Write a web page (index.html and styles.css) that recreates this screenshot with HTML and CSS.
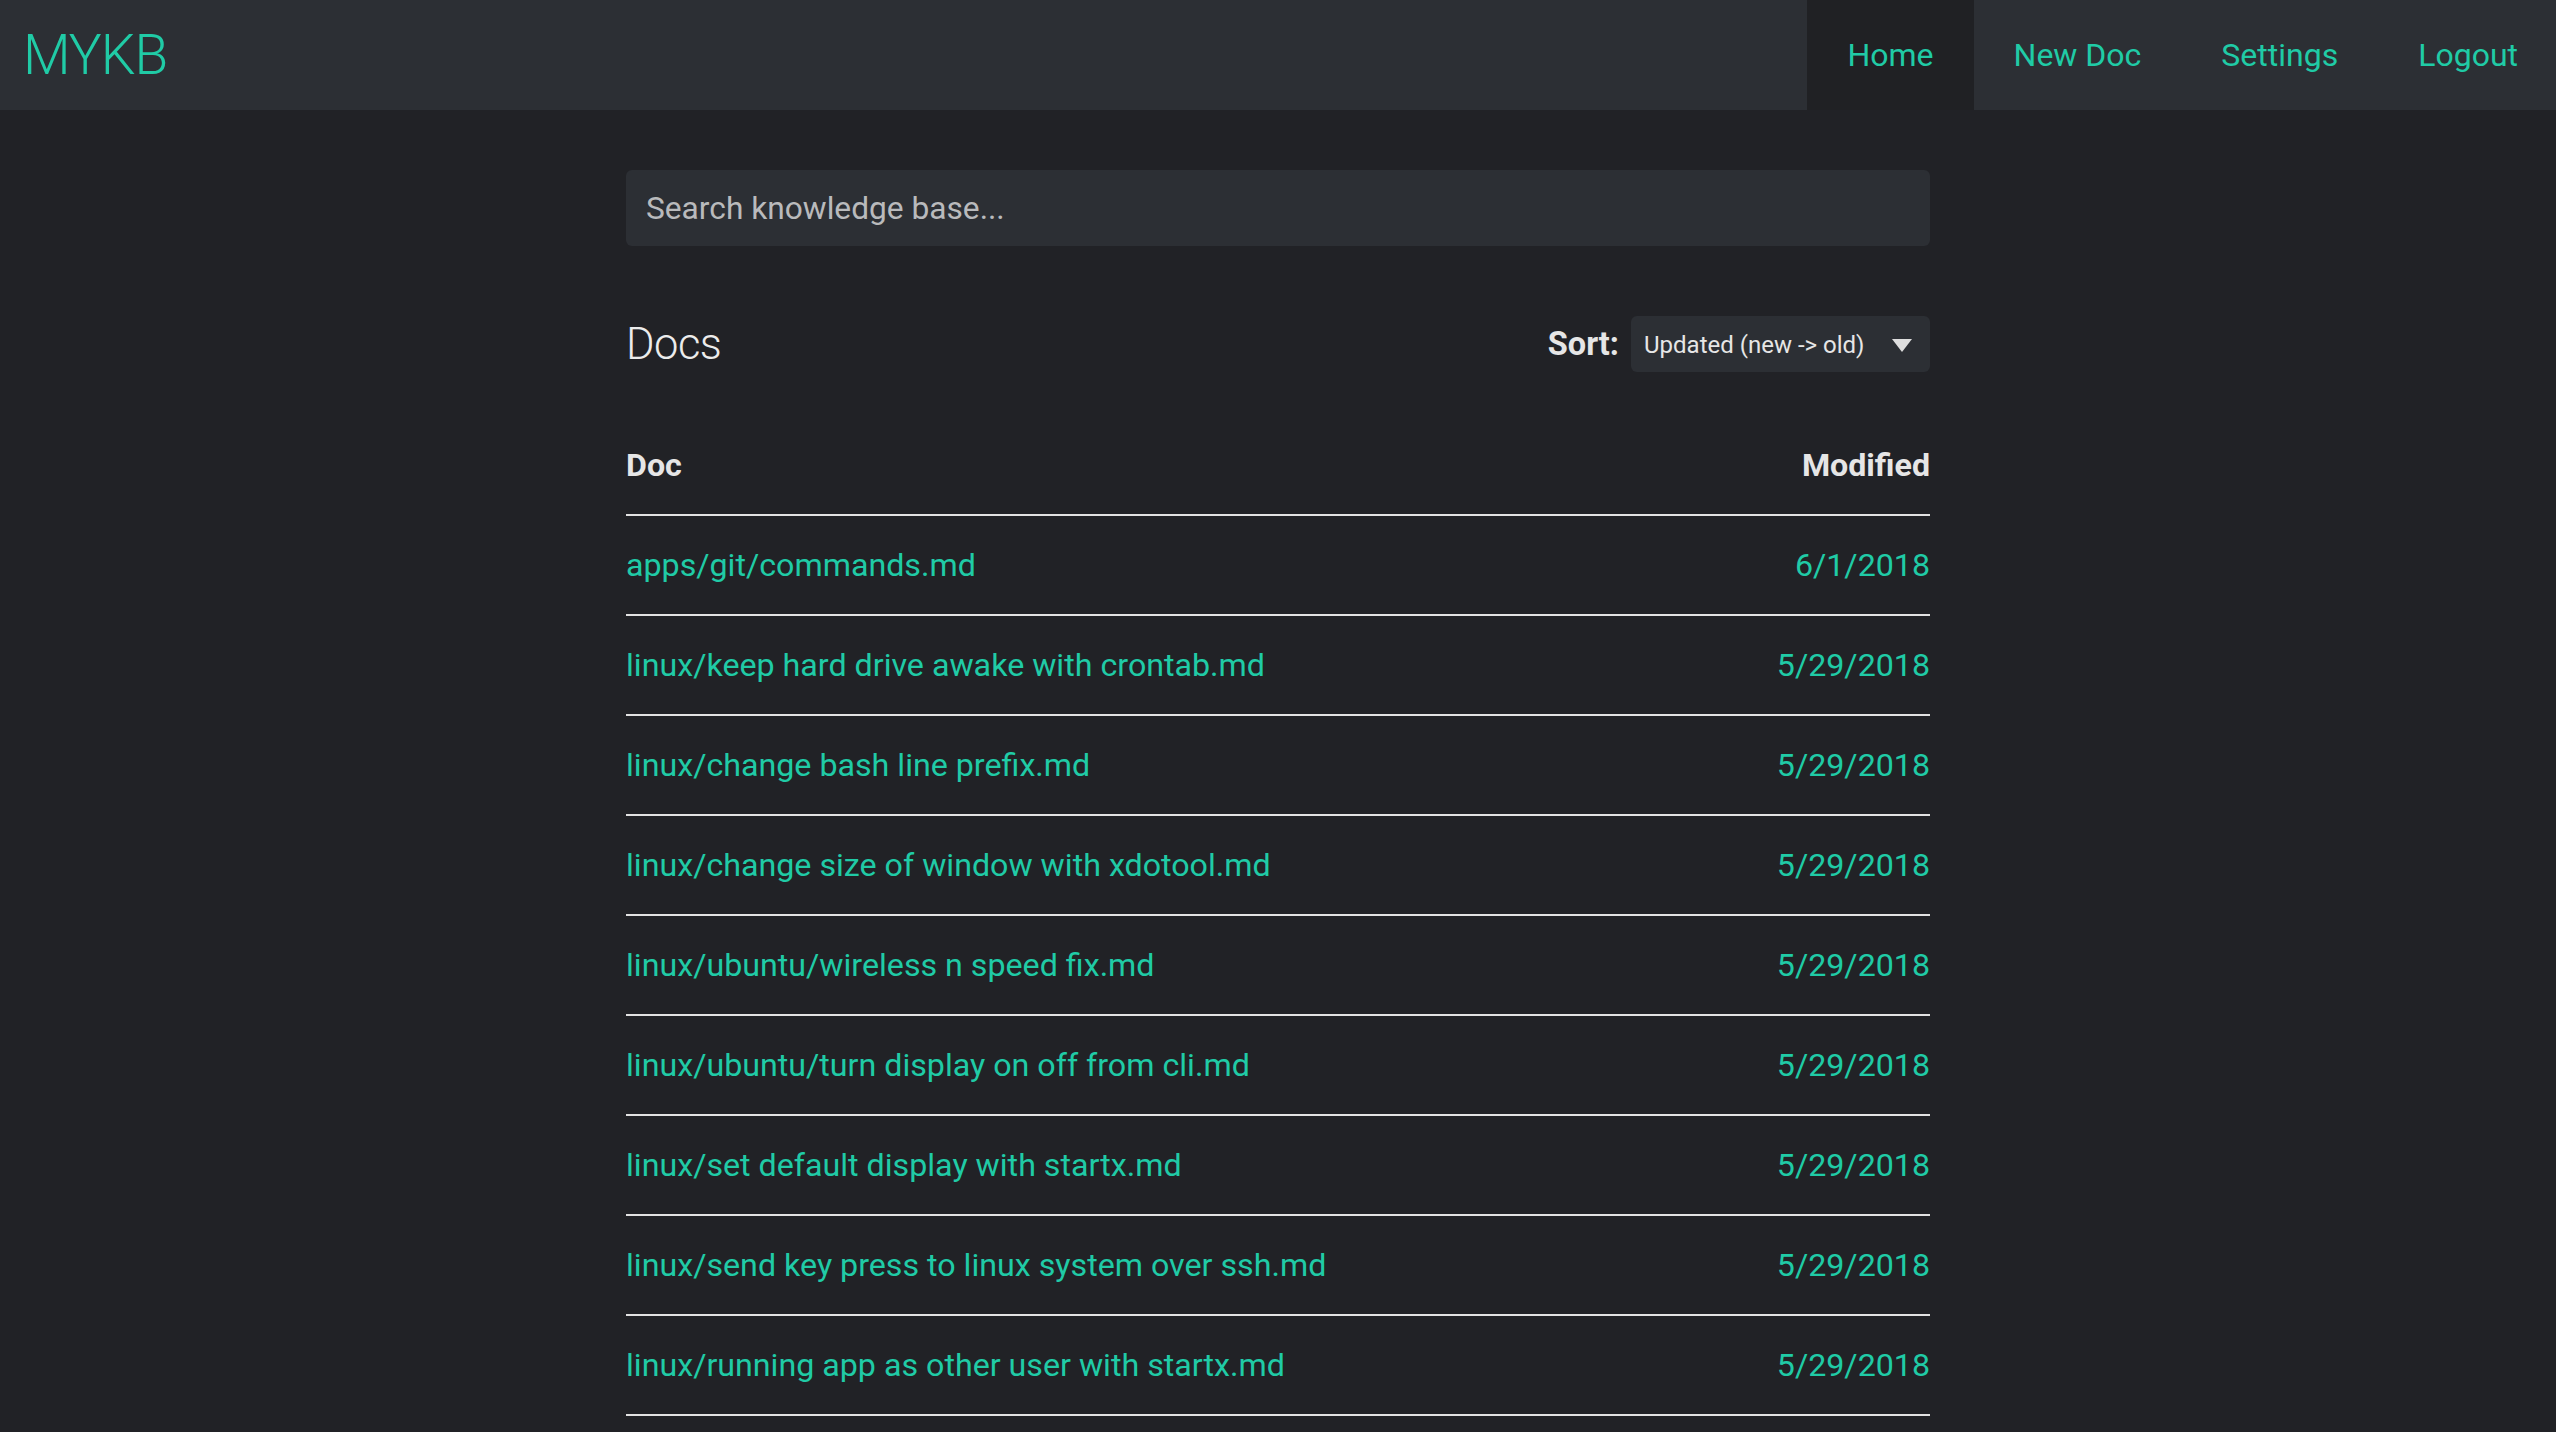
FILE: index.html
```html
<!DOCTYPE html>
<html lang="en">
<head>
<meta charset="utf-8">
<title>MYKB</title>
<link rel="stylesheet" href="styles.css">
</head>
<body>
<header class="navbar">
  <a class="brand" href="#">MYKB</a>
  <nav class="nav">
    <a class="nav-item active" href="#">Home</a>
    <a class="nav-item" href="#">New Doc</a>
    <a class="nav-item" href="#">Settings</a>
    <a class="nav-item" href="#">Logout</a>
  </nav>
</header>
<main class="container">
  <div class="search">Search knowledge base...</div>
  <div class="docs-head">
    <h1 class="title">Docs</h1>
    <div class="sort">
      <span class="sort-label">Sort:</span>
      <div class="select">
        <span>Updated (new -&gt; old)</span>
        <svg class="caret" width="20" height="13" viewBox="0 0 20 13"><path d="M0 0 H20 L10 13 Z" fill="#dedede"/></svg>
      </div>
    </div>
  </div>
  <table class="docs">
    <thead>
      <tr><th class="c-doc">Doc</th><th class="c-mod">Modified</th></tr>
    </thead>
    <tbody>
      <tr><td><a href="#">apps/git/commands.md</a></td><td class="c-mod"><a href="#">6/1/2018</a></td></tr>
      <tr><td><a href="#">linux/keep hard drive awake with crontab.md</a></td><td class="c-mod"><a href="#">5/29/2018</a></td></tr>
      <tr><td><a href="#">linux/change bash line prefix.md</a></td><td class="c-mod"><a href="#">5/29/2018</a></td></tr>
      <tr><td><a href="#">linux/change size of window with xdotool.md</a></td><td class="c-mod"><a href="#">5/29/2018</a></td></tr>
      <tr><td><a href="#">linux/ubuntu/wireless n speed fix.md</a></td><td class="c-mod"><a href="#">5/29/2018</a></td></tr>
      <tr><td><a href="#">linux/ubuntu/turn display on off from cli.md</a></td><td class="c-mod"><a href="#">5/29/2018</a></td></tr>
      <tr><td><a href="#">linux/set default display with startx.md</a></td><td class="c-mod"><a href="#">5/29/2018</a></td></tr>
      <tr><td><a href="#">linux/send key press to linux system over ssh.md</a></td><td class="c-mod"><a href="#">5/29/2018</a></td></tr>
      <tr><td><a href="#">linux/running app as other user with startx.md</a></td><td class="c-mod"><a href="#">5/29/2018</a></td></tr>
    </tbody>
  </table>
</main>
</body>
</html>
```

FILE: styles.css
```css
* { box-sizing: border-box; }
html, body { margin: 0; padding: 0; }
body {
  background: #212226;
  font-family: Roboto, "Liberation Sans", sans-serif;
  color: #e6e6e6;
  overflow: hidden;
  height: 1432px;
}
a { text-decoration: none; color: #20cba6; }

.navbar {
  height: 110px;
  background: #2c2f34;
  display: flex;
  align-items: stretch;
  justify-content: space-between;
}
.brand {
  display: flex;
  align-items: center;
  padding-left: 23px;
  font-size: 55px;
  font-weight: 300;
  letter-spacing: -1px;
  color: #20cba6;
}
.nav { display: flex; align-items: stretch; }
.nav-item {
  display: flex;
  align-items: center;
  padding: 0 40px 0 40px;
  font-size: 32px;
  font-weight: 400;
  color: #20cba6;
}
.nav-item:last-child { padding-right: 38px; }
.nav-item.active { background: #202124; }

.container {
  width: 1304px;
  margin: 0 auto;
  padding-top: 60px;
}
.search {
  height: 76px;
  background: #2c2f34;
  border-radius: 6px;
  display: flex;
  align-items: center;
  padding-left: 20px;
  font-size: 31.7px;
  color: #b9babc;
}
.docs-head {
  margin-top: 70px;
  height: 56px;
  display: flex;
  align-items: center;
  justify-content: space-between;
}
.title {
  margin: 0;
  font-size: 43.5px;
  font-weight: 300;
  color: #ececec;
  letter-spacing: -0.5px;
}
.sort { display: flex; align-items: center; gap: 12px; }
.sort-label {
  font-size: 32.5px;
  font-weight: 700;
  color: #e6e6e6;
}
.select {
  width: 299px;
  height: 56px;
  background: #2c2f34;
  border-radius: 6px;
  display: flex;
  align-items: center;
  justify-content: space-between;
  padding: 2px 18px 0 13px;
  font-size: 24px;
  color: #e6e6e6;
}
.caret { display: block; }

.docs {
  width: 100%;
  border-collapse: collapse;
  margin-top: 43px;
}
.docs th, .docs td {
  height: 100px;
  padding: 0;
  border-bottom: 2px solid #e2e2e2;
  font-size: 32.2px;
  vertical-align: middle;
}
.docs th {
  font-weight: 700;
  color: #e6e6e6;
  text-align: left;
}
.docs .c-mod { text-align: right; }
```
